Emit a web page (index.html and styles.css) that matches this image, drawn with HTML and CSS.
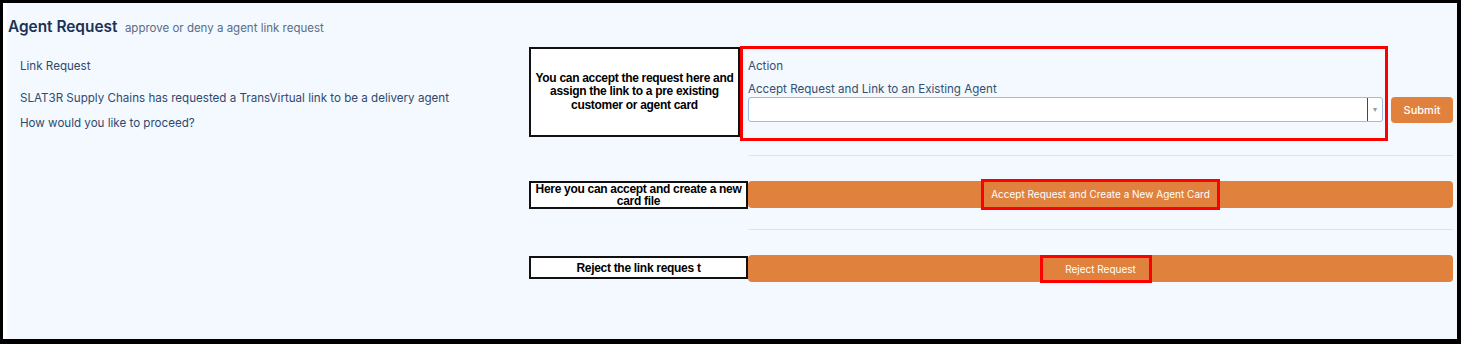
FILE: index.html
```html
<!DOCTYPE html>
<html>
  <head>
    <title>Agent Request</title>
    <meta charset="utf-8"/>
    <link rel="stylesheet" href="styles.css">
  </head>
  <body>
    <div class="frame">
      <div class="page">
        <div class="header">
          <span class="title">Agent Request</span>
          <span class="subtitle">approve or deny a agent link request</span>
        </div>

        <div class="main">
          <div class="info">
            <p class="info-head">Link Request</p>
            <p class="info-line">SLAT3R Supply Chains has requested a TransVirtual link to be a delivery agent</p>
            <p class="info-line info-line--tight">How would you like to proceed?</p>
          </div>

          <div class="actions">
            <div class="row row--link">
              <div class="note note--tall">You can accept the request here and<br>assign the link to a pre existing<br>customer or agent card</div>
              <div class="highlight highlight--group">
                <div class="field-label">Action</div>
                <div class="field-label field-label--sub">Accept Request and Link to an Existing Agent</div>
                <div class="select">
                  <span class="select-cursor"></span>
                  <span class="select-caret">&#9662;</span>
                </div>
              </div>
              <button class="btn-submit">Submit</button>
            </div>

            <div class="divider"></div>

            <div class="row">
              <div class="note">Here you can accept and create a new<br>card file</div>
              <div class="bar">
                <span class="highlight highlight--text">Accept Request and Create a New Agent Card</span>
              </div>
            </div>

            <div class="divider divider--short"></div>

            <div class="row">
              <div class="note note--single">Reject the link reques t</div>
              <div class="bar">
                <span class="highlight highlight--text highlight--reject">Reject Request</span>
              </div>
            </div>
          </div>
        </div>
      </div>
    </div>
  </body>
</html>
```

FILE: styles.css
```css
html, body {
  margin: 0;
  padding: 0;
  height: 100%;
}

body {
  background: #000;
  font-family: Inter, "Noto Sans", sans-serif;
}

.frame {
  height: 344px;
  box-sizing: border-box;
  border-style: solid;
  border-color: #000;
  border-width: 3px 4px 5px 3px;
}

.page {
  height: 100%;
  box-sizing: border-box;
  border-left: 4px solid #fff;
  background: #f4f8ff;
}

.header {
  padding: 12px 0 0 1px;
  line-height: 22px;
  height: 31px;
}

.title {
  font-size: 15.4px;
  font-weight: 600;
  color: #1b3256;
}

.subtitle {
  margin-left: 3px;
  font-size: 11.5px;
  color: #5a6d86;
}

.main {
  display: flex;
}

.info {
  width: 509px;
  padding: 11px 0 0 13px;
  color: #2e4a6e;
  font-size: 11.6px;
  line-height: 18px;
}

.info p {
  margin: 0;
}

.info-line {
  margin-top: 14px !important;
}

.info-line--tight {
  margin-top: 7px !important;
}

.actions {
  width: 924px;
}

.row {
  display: flex;
  align-items: stretch;
}

.row--link {
  align-items: flex-start;
}

/* black callout boxes */
.note {
  width: 219px;
  box-sizing: border-box;
  border: 2px solid #111;
  background: #fff;
  font-family: "Liberation Sans", Arial, sans-serif;
  font-weight: bold;
  font-size: 12px;
  letter-spacing: -0.3px;
  line-height: 12px;
  color: #000;
  text-align: center;
  display: flex;
  align-items: center;
  justify-content: center;
}

.note--tall {
  width: 211px;
  height: 90px;
  margin-top: 1px;
  line-height: 13.5px;
}

.note--single {
  height: 23px;
  margin-top: 1px;
  align-self: flex-start;
}

/* red highlight overlays */
.highlight {
  border: 3px solid #f00;
  box-sizing: border-box;
}

.highlight--group {
  width: 648px;
  height: 95px;
  padding: 9px 2px 0 5px;
}

.field-label {
  font-size: 11.6px;
  line-height: 16px;
  color: #34506f;
}

.field-label--sub {
  margin-top: 7px;
}

.select {
  height: 25px;
  box-sizing: border-box;
  background: #fff;
  border: 1px solid #9dbbe6;
  border-radius: 3px;
  display: flex;
  justify-content: flex-end;
  align-items: stretch;
}

.select-cursor {
  width: 1px;
  background: #1f4b94;
}

.select-caret {
  width: 14px;
  font-size: 8px;
  color: #999;
  text-align: center;
  line-height: 22px;
}

.btn-submit {
  margin: 51px 0 0 3px;
  width: 62px;
  height: 26px;
  border: none;
  border-radius: 4px;
  background: #e0823e;
  color: #fff;
  font-family: Inter, sans-serif;
  font-size: 11px;
  font-weight: 500;
  padding: 0;
}

.divider {
  margin: 14px 0 25px 219px;
  height: 1px;
  background: #dfe4ea;
}

.divider--short {
  margin-top: 20px;
}

.bar {
  flex: 1;
  height: 27px;
  background: #e0823e;
  border-radius: 4px;
  display: flex;
  align-items: center;
  justify-content: center;
}

.highlight--text {
  height: 31px;
  line-height: 25px;
  padding: 0 7px;
  flex-shrink: 0;
  color: #fff;
  font-size: 10px;
}

.highlight--reject {
  height: 28px;
  line-height: 22px;
  padding: 0 13px 0 22px;
  margin-right: 9px;
}
```
